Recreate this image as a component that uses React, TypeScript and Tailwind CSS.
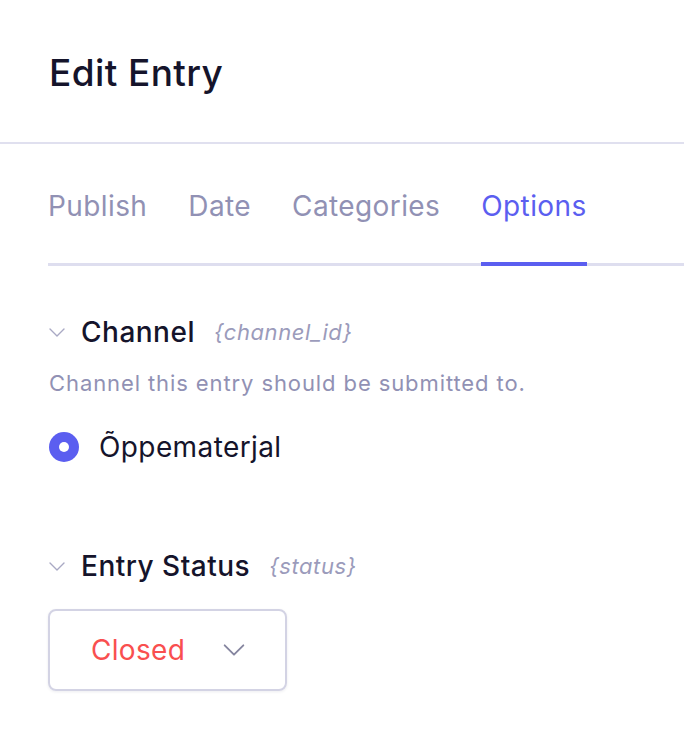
import React, { useState } from 'react';

const tabs = ['Publish', 'Date', 'Categories', 'Options'];

const Chevron: React.FC<{ className?: string }> = ({ className }) => (
    <svg viewBox="0 0 16 9" fill="none" className={className}>
        <path d="M1 1l7 7 7-7" stroke="currentColor" strokeWidth="1.4" strokeLinecap="round" strokeLinejoin="round" />
    </svg>
);

const SectionHead: React.FC<{ title: string; tag: string }> = ({ title, tag }) => (
    <div className="flex items-center h-[34px]">
        <Chevron className="w-[16px] h-[9px] text-[#a9a9c4]" />
        <span className="ml-[16px] text-[28px] font-medium text-[#15142b] leading-[34px] tracking-[0.5px]">{title}</span>
        <span className="ml-[19px] text-[22px] italic text-[#9b9bbb] leading-[34px] tracking-[0.6px]">{tag}</span>
    </div>
);

const App: React.FC = () => {
    const [active, setActive] = useState('Options');

    return (
        <div className="w-[684px] h-[730px] bg-white overflow-hidden" style={{ fontFamily: 'Inter, "Noto Sans", sans-serif' }}>
            <div className="h-[144px] flex items-center pl-[49px] pt-[4px] border-b-2 border-[#e0e0ef]">
                <h1 className="text-[37px] font-medium text-[#15142b] tracking-[0.4px]">Edit Entry</h1>
            </div>

            <div className="ml-[48px] flex gap-[41px] border-b-[3px] border-[#dedeef]">
                {tabs.map((t) => (
                    <button
                        key={t}
                        onClick={() => setActive(t)}
                        className={`relative pt-[45px] pb-[40px] text-[28px] leading-[34px] tracking-[0.4px] ${active === t ? 'text-[#5b5ef0]' : 'text-[#9191b4]'}`}
                    >
                        {t}
                        {active === t && <span className="absolute left-0 right-0 -bottom-[3px] h-[4px] bg-[#5b5ef0]" />}
                    </button>
                ))}
            </div>

            <div className="pl-[49px] pt-[49px]">
                <SectionHead title="Channel" tag="{channel_id}" />
                <p className="mt-[20px] text-[22px] leading-[28px] text-[#9191b4] tracking-[0.9px]">
                    Channel this entry should be submitted to.
                </p>
                <label className="mt-[33px] flex items-center h-[34px]">
                    <span className="w-[30px] h-[30px] rounded-full bg-[#5b5ef0] flex items-center justify-center">
                        <span className="w-[10px] h-[10px] rounded-full bg-white" />
                    </span>
                    <span className="ml-[20px] text-[28px] leading-[34px] text-[#15142b] tracking-[0.4px]">Õppematerjal</span>
                </label>

                <div className="mt-[85px]">
                    <SectionHead title="Entry Status" tag="{status}" />
                </div>

                <button className="mt-[26px] -ml-[1px] w-[239px] h-[82px] border-2 border-[#d3d3e4] rounded-[8px] shadow-[0_1px_3px_rgba(20,20,60,0.08)] flex items-center pl-[41px]">
                    <span className="text-[28px] leading-[34px] text-[#f94f4f] tracking-[0.3px]">Closed</span>
                    <Chevron className="ml-[38px] w-[22px] h-[12px] text-[#85859f]" />
                </button>
            </div>
        </div>
    );
};

export default App;
